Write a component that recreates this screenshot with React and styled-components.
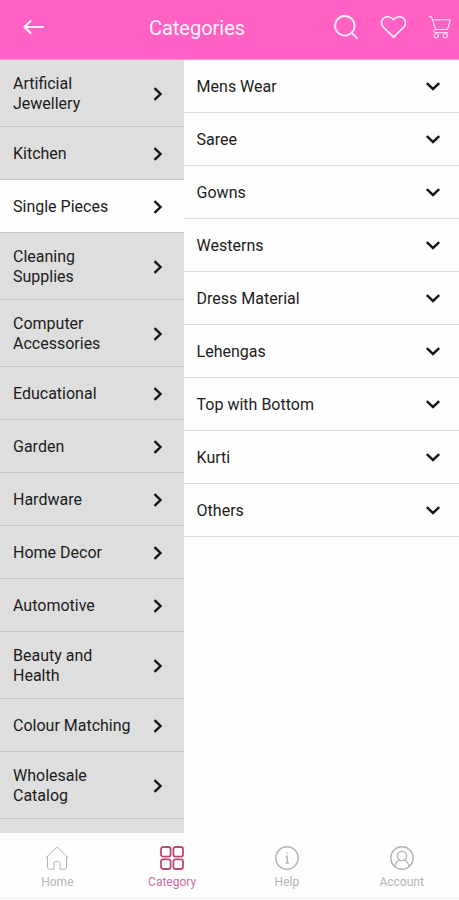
import React, { useState } from 'react';
import styled, { createGlobalStyle } from 'styled-components';

const GlobalStyle = createGlobalStyle`
	* {
		box-sizing: border-box;
	}

	body {
		margin: 0;
		background: #fefefe;
		color: #1c1c1c;
		font-family: Roboto, "Liberation Sans", sans-serif;
	}

	button {
		font: inherit;
		color: inherit;
		cursor: pointer;
	}
`;

const Screen = styled.div`
	display: flex;
	flex-direction: column;
	height: 100vh;
`;

const Header = styled.header`
	display: flex;
	align-items: center;
	height: 60px;
	flex-shrink: 0;
	padding: 0 7px 6px 22px;
	background: #ff62c4;
	border-bottom: 1px solid #f595cd;
	color: #fff0fa;
`;

const IconButton = styled.button`
	display: flex;
	padding: 0;
	border: 0;
	background: none;
`;

const BackButton = styled(IconButton)`
	width: 38px;
`;

const Title = styled.h1`
	flex: 1;
	margin: 0;
	padding-top: 2px;
	font-size: 20px;
	font-weight: 400;
	line-height: 24px;
	text-align: center;
`;

const Actions = styled.div`
	display: flex;
	align-items: center;
	gap: 22px;
`;

const Main = styled.main`
	display: flex;
	flex: 1;
	min-height: 0;
`;

const Sidebar = styled.nav`
	flex: 0 0 40%;
	overflow-y: auto;
	scrollbar-width: none;
	background: #dedede;
`;

const Panel = styled.section`
	flex: 1;
	overflow-y: auto;
	scrollbar-width: none;
`;

const Row = styled.button`
	display: flex;
	align-items: center;
	justify-content: space-between;
	gap: 14px;
	width: 100%;
	min-height: 53px;
	padding: 14px 18px 12px 13px;
	border: 0;
	border-bottom: 1px solid #dddddd;
	background: none;
	font-size: 16px;
	line-height: 20px;
	text-align: left;
`;

const CategoryRow = styled(Row)`
	border-bottom-color: #c6c6c6;
	background: ${(props) => (props.$active ? '#fefefe' : 'none')};
`;

const Chevron = styled.svg`
	flex-shrink: 0;
	fill: none;
	stroke: #161616;
	stroke-width: 2.4;
`;

const TabBar = styled.nav`
	display: flex;
	height: 66px;
	flex-shrink: 0;
	margin-bottom: 1px;
	border-bottom: 1px solid #f2f2f2;
	background: #fefefe;
`;

const Tab = styled.a`
	display: flex;
	flex: 1;
	flex-direction: column;
	align-items: center;
	gap: 4px;
	padding-top: 13px;
	color: ${(props) => (props.$active ? '#cf6ca8' : '#b4b4b4')};
	font-size: 12px;
	line-height: 16px;
	text-decoration: none;
`;

const Svg = ({ size = 24, stroke = 1.5, children }) => (
	<svg
		width={size}
		height={size}
		viewBox="0 0 24 24"
		fill="none"
		stroke="currentColor"
		strokeWidth={stroke}
		strokeLinecap="round"
		strokeLinejoin="round"
		aria-hidden="true"
	>
		{children}
	</svg>
);

const BackIcon = () => (
	<Svg stroke={2.2}>
		<path d="M21 12H2.500M8.500 6l-6 6 6 6" />
	</Svg>
);

const SearchIcon = () => (
	<Svg stroke={1.8}>
		<circle cx="10.800" cy="10.800" r="9.800" />
		<path d="M17.800 17.800L23 23.200" />
	</Svg>
);

const HeartIcon = () => (
	<Svg size={26}>
		<path d="M12.500 21.300L3.200 12.200C.3 9.100 1.300 5.300 3.800 3.600c2.800-1.900 6.700-1 8.700 1.600 2-2.600 5.900-3.500 8.700-1.600 2.500 1.700 3.500 5.500.6 8.600z" />
	</Svg>
);

const CartIcon = () => (
	<Svg stroke={1}>
		<path d="M1.200 1.800h2.300l1 3h17.800l-2.800 9.700H7.600L4.500 4.800M7.600 14.500c-2.600.4-2.600 3 0 3.200h12.200" />
		<circle cx="8.300" cy="20.700" r="2.200" />
		<circle cx="17.300" cy="20.700" r="2.200" />
	</Svg>
);

const ChevronRight = () => (
	<Chevron width="16" height="16" viewBox="0 0 16 16" aria-hidden="true">
		<path d="M4.500 2.200l6 5.800-6 5.800" />
	</Chevron>
);

const ChevronDown = () => (
	<Chevron width="16" height="16" viewBox="0 0 16 16" aria-hidden="true">
		<path d="M1.800 4.200L8 10l6.200-5.800" />
	</Chevron>
);

const HomeIcon = () => (
	<Svg stroke={1}>
		<path d="M.8 11.800L12 .8l11.200 11M2.500 10.400v10.800c0 1.300.8 2 2 2H9v-6c0-1 .6-1.600 1.500-1.600h3c.9 0 1.500.6 1.500 1.600v6h4.500c1.200 0 2-.7 2-2V10.400" />
	</Svg>
);

const GridIcon = () => (
	<svg width="24" height="24" viewBox="0 0 24 24" fill="none" stroke="#bd4678" strokeWidth="1.800" aria-hidden="true">
		<rect x="1" y="1" width="9.600" height="9.600" rx="2.200" />
		<rect x="13.400" y="1" width="9.600" height="9.600" rx="2.200" />
		<rect x="1" y="13.400" width="9.600" height="9.600" rx="2.200" />
		<rect x="13.400" y="13.400" width="9.600" height="9.600" rx="2.200" />
	</svg>
);

const HelpIcon = () => (
	<Svg stroke={1.4}>
		<circle cx="12" cy="12" r="11.200" />
		<path d="M11.200 10.200h1v6.800M11 17h2.400M12 6.900v.4" />
	</Svg>
);

const AccountIcon = () => (
	<Svg stroke={1.4}>
		<circle cx="12" cy="12" r="11.200" />
		<circle cx="12" cy="10" r="4.600" />
		<path d="M5 20.500c.5-3 2-5.200 4.500-6.500M19 20.500c-.5-3-2-5.200-4.500-6.500" />
	</Svg>
);

const categories = [
	'Artificial Jewellery',
	'Kitchen',
	'Single Pieces',
	'Cleaning Supplies',
	'Computer Accessories',
	'Educational',
	'Garden',
	'Hardware',
	'Home Decor',
	'Automotive',
	'Beauty and Health',
	'Colour Matching',
	'Wholesale Catalog',
];

const subCategories = [
	'Mens Wear',
	'Saree',
	'Gowns',
	'Westerns',
	'Dress Material',
	'Lehengas',
	'Top with Bottom',
	'Kurti',
	'Others',
];

const tabs = [
	{ name: 'Home', Icon: HomeIcon },
	{ name: 'Category', Icon: GridIcon },
	{ name: 'Help', Icon: HelpIcon },
	{ name: 'Account', Icon: AccountIcon },
];

const App = () => {
	const [selected, setSelected] = useState('Single Pieces');

	return (
		<Screen>
			<GlobalStyle />
			<Header>
				<BackButton aria-label="Back"><BackIcon /></BackButton>
				<Title>Categories</Title>
				<Actions>
					<IconButton aria-label="Search"><SearchIcon /></IconButton>
					<IconButton aria-label="Wishlist"><HeartIcon /></IconButton>
					<IconButton aria-label="Cart"><CartIcon /></IconButton>
				</Actions>
			</Header>
			<Main>
				<Sidebar>
					{categories.map((name) => (
						<CategoryRow key={name} $active={name === selected} onClick={() => setSelected(name)}>
							<span>{name}</span>
							<ChevronRight />
						</CategoryRow>
					))}
				</Sidebar>
				<Panel>
					{subCategories.map((name) => (
						<Row key={name}>
							<span>{name}</span>
							<ChevronDown />
						</Row>
					))}
				</Panel>
			</Main>
			<TabBar>
				{tabs.map(({ name, Icon }) => (
					<Tab key={name} href="#" $active={name === 'Category'}>
						<Icon />
						{name}
					</Tab>
				))}
			</TabBar>
		</Screen>
	);
}

export default App;
